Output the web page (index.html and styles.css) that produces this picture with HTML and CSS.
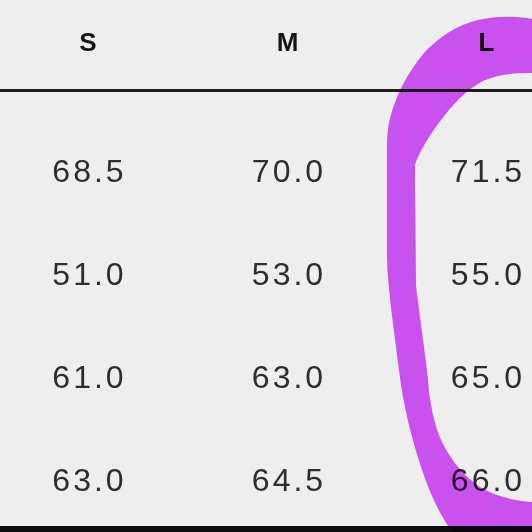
FILE: index.html
```html
<!DOCTYPE html>
<html lang="ko">
<head>
<meta charset="utf-8">
<title>Size chart</title>
<link rel="stylesheet" href="styles.css">
</head>
<body>
<div class="chart">
  <div class="row head">
    <div class="cell">S</div>
    <div class="cell">M</div>
    <div class="cell">L</div>
  </div>
  <div class="rows">
    <div class="row"><div class="cell">68.5</div><div class="cell">70.0</div><div class="cell">71.5</div></div>
    <div class="row"><div class="cell">51.0</div><div class="cell">53.0</div><div class="cell">55.0</div></div>
    <div class="row"><div class="cell">61.0</div><div class="cell">63.0</div><div class="cell">65.0</div></div>
    <div class="row"><div class="cell">63.0</div><div class="cell">64.5</div><div class="cell">66.0</div></div>
  </div>
</div>
<svg class="mark" width="532" height="532" viewBox="0 0 532 532" xmlns="http://www.w3.org/2000/svg">
  <path fill="#d857ff" d="M532,19 C522,17 500,15 478,20 C456,25 438,38 424,53 C408,72 396,95 390,118 C386,135 387,150 387,165 L387,260 C388,290 394,330 399,370 C403,405 412,440 422,470 C432,500 444,522 458,540 L532,540 L532,502 C515,501 495,496 480,487 C465,477 452,462 442,442 C434,424 430,405 428,380 C425,350 420,320 416,285 L415,165 C418,155 428,136 445,115 C456,101 468,89 483,81 C498,74 515,73 532,73 Z"/>
</svg>
</body>
</html>
```

FILE: styles.css
```css
html, body {
  margin: 0;
  padding: 0;
}
body {
  width: 532px;
  height: 532px;
  overflow: hidden;
  background: #eeeeee;
  position: relative;
  font-family: "Liberation Sans", Arial, sans-serif;
}
.chart {
  width: 532px;
  height: 532px;
}
.row {
  display: grid;
  grid-template-columns: 188px 199px 145px;
}
.cell {
  text-align: center;
  white-space: nowrap;
}
.cell:first-child {
  padding-right: 12px;
}
.cell:last-child {
  padding-left: 54px;
}
.head {
  height: 89px;
  border-bottom: 3px solid #1e1e1e;
}
.head .cell {
  font-size: 26px;
  font-weight: bold;
  line-height: 84px;
  color: #161616;
}
.rows {
  box-sizing: border-box;
  height: 440px;
  display: grid;
  grid-template-rows: 103px 103px 103px 97px;
  padding-top: 28px;
  border-bottom: 6px solid #0e0e0e;
}
.rows .row {
  align-items: start;
}
.rows .cell {
  font-size: 32px;
  line-height: 103px;
  letter-spacing: 3px;
  text-indent: 3px;
  color: #2e2e2e;
}
.mark {
  position: absolute;
  left: 0;
  top: 0;
  mix-blend-mode: multiply;
  pointer-events: none;
}
```
